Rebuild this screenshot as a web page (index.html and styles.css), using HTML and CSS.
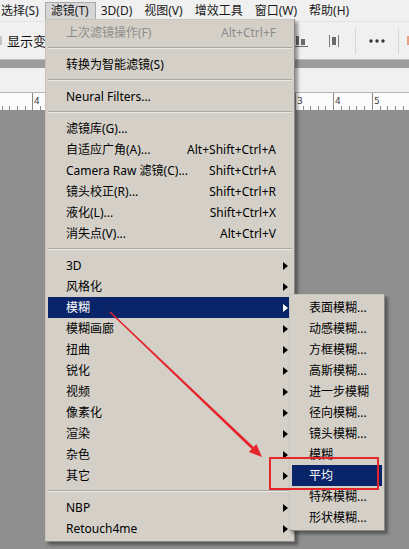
FILE: index.html
```html
<!DOCTYPE html>
<html lang="zh-CN">
<head>
<meta charset="utf-8">
<title>滤镜菜单</title>
<link rel="stylesheet" href="styles.css">
</head>
<body>
<div class="app">
  <div class="menubar">
    <span class="mb-item">选择(S)</span>
    <span class="mb-item active">滤镜(T)</span>
    <span class="mb-item">3D(D)</span>
    <span class="mb-item">视图(V)</span>
    <span class="mb-item">增效工具</span>
    <span class="mb-item">窗口(W)</span>
    <span class="mb-item">帮助(H)</span>
  </div>
  <div class="toolbar">
    <span class="grip"></span>
    <span class="tool-label">显示变换控件</span>
    <svg class="ico ico-first" width="13" height="12" viewBox="0 0 13 12"><rect x="1" y="1" width="3" height="9" fill="#6a6a6a"/><rect x="6" y="4" width="4" height="6" fill="#6a6a6a"/><rect x="0" y="11" width="13" height="1" fill="#6a6a6a"/></svg>
    <svg class="ico ico-second" width="10" height="12" viewBox="0 0 10 12"><rect x="0" y="0" width="1" height="12" fill="#7a7a7a"/><rect x="9" y="0" width="1" height="12" fill="#7a7a7a"/><rect x="3" y="2" width="4" height="8" fill="#6a6a6a"/></svg>
    <span class="tsep tsep-a"></span>
    <svg class="dots" width="16" height="4" viewBox="0 0 16 4"><circle cx="2" cy="2" r="1.7" fill="#333"/><circle cx="8" cy="2" r="1.7" fill="#333"/><circle cx="14" cy="2" r="1.7" fill="#333"/></svg>
    <span class="tsep tsep-b"></span>
    <span class="orange"></span>
  </div>
  <div class="panelbar"></div>
  <div class="tabbar"></div>
  <div class="ruler">
    <svg width="409" height="17" viewBox="0 0 409 17">
      <g stroke="#8a8a8a" stroke-width="1">
        <line x1="32.5" y1="0" x2="32.5" y2="17"/>
        <line x1="295.5" y1="0" x2="295.5" y2="17"/>
        <line x1="333.5" y1="0" x2="333.5" y2="17"/>
        <line x1="372.5" y1="0" x2="372.5" y2="17"/>
        <line x1="2.5" y1="13" x2="2.5" y2="17"/>
        <line x1="9.5" y1="13" x2="9.5" y2="17"/>
        <line x1="17.5" y1="13" x2="17.5" y2="17"/>
        <line x1="25.5" y1="13" x2="25.5" y2="17"/>
        <line x1="40.5" y1="13" x2="40.5" y2="17"/>
        <line x1="303.5" y1="13" x2="303.5" y2="17"/>
        <line x1="310.5" y1="13" x2="310.5" y2="17"/>
        <line x1="318.5" y1="13" x2="318.5" y2="17"/>
        <line x1="325.5" y1="13" x2="325.5" y2="17"/>
        <line x1="341.5" y1="13" x2="341.5" y2="17"/>
        <line x1="349.5" y1="13" x2="349.5" y2="17"/>
        <line x1="356.5" y1="13" x2="356.5" y2="17"/>
        <line x1="364.5" y1="13" x2="364.5" y2="17"/>
        <line x1="380.5" y1="13" x2="380.5" y2="17"/>
        <line x1="387.5" y1="13" x2="387.5" y2="17"/>
        <line x1="395.5" y1="13" x2="395.5" y2="17"/>
        <line x1="403.5" y1="13" x2="403.5" y2="17"/>
      </g>
      <g class="rnum" fill="#444">
        <text x="34" y="11">4</text>
        <text x="297" y="11">3</text>
        <text x="335" y="11">4</text>
        <text x="374" y="11">5</text>
      </g>
    </svg>
  </div>
  <div class="canvas"></div>

  <div class="menu main-menu">
    <div class="mi dis"><span class="label">上次滤镜操作(F)</span><span class="key">Alt+Ctrl+F</span><span class="gut"></span></div>
    <div class="sep"></div>
    <div class="mi"><span class="label">转换为智能滤镜(S)</span><span class="gut"></span></div>
    <div class="sep"></div>
    <div class="mi"><span class="label">Neural Filters...</span><span class="gut"></span></div>
    <div class="sep"></div>
    <div class="mi"><span class="label">滤镜库(G)...</span><span class="gut"></span></div>
    <div class="mi"><span class="label">自适应广角(A)...</span><span class="key">Alt+Shift+Ctrl+A</span><span class="gut"></span></div>
    <div class="mi"><span class="label">Camera Raw 滤镜(C)...</span><span class="key">Shift+Ctrl+A</span><span class="gut"></span></div>
    <div class="mi"><span class="label">镜头校正(R)...</span><span class="key">Shift+Ctrl+R</span><span class="gut"></span></div>
    <div class="mi"><span class="label">液化(L)...</span><span class="key">Shift+Ctrl+X</span><span class="gut"></span></div>
    <div class="mi"><span class="label">消失点(V)...</span><span class="key">Alt+Ctrl+V</span><span class="gut"></span></div>
    <div class="sep"></div>
    <div class="mi"><span class="label">3D</span><span class="gut"><i class="arrow"></i></span></div>
    <div class="mi"><span class="label">风格化</span><span class="gut"><i class="arrow"></i></span></div>
    <div class="mi sel"><span class="label">模糊</span><span class="gut"><i class="arrow"></i></span></div>
    <div class="mi"><span class="label">模糊画廊</span><span class="gut"><i class="arrow"></i></span></div>
    <div class="mi"><span class="label">扭曲</span><span class="gut"><i class="arrow"></i></span></div>
    <div class="mi"><span class="label">锐化</span><span class="gut"><i class="arrow"></i></span></div>
    <div class="mi"><span class="label">视频</span><span class="gut"><i class="arrow"></i></span></div>
    <div class="mi"><span class="label">像素化</span><span class="gut"><i class="arrow"></i></span></div>
    <div class="mi"><span class="label">渲染</span><span class="gut"><i class="arrow"></i></span></div>
    <div class="mi"><span class="label">杂色</span><span class="gut"><i class="arrow"></i></span></div>
    <div class="mi"><span class="label">其它</span><span class="gut"><i class="arrow"></i></span></div>
    <div class="sep"></div>
    <div class="mi"><span class="label">NBP</span><span class="gut"><i class="arrow"></i></span></div>
    <div class="mi"><span class="label">Retouch4me</span><span class="gut"><i class="arrow"></i></span></div>
  </div>

  <div class="menu sub-menu">
    <div class="mi"><span class="label">表面模糊...</span></div>
    <div class="mi"><span class="label">动感模糊...</span></div>
    <div class="mi"><span class="label">方框模糊...</span></div>
    <div class="mi"><span class="label">高斯模糊...</span></div>
    <div class="mi"><span class="label">进一步模糊</span></div>
    <div class="mi"><span class="label">径向模糊...</span></div>
    <div class="mi"><span class="label">镜头模糊...</span></div>
    <div class="mi"><span class="label">模糊</span></div>
    <div class="mi sel"><span class="label">平均</span></div>
    <div class="mi"><span class="label">特殊模糊...</span></div>
    <div class="mi"><span class="label">形状模糊...</span></div>
  </div>

  <svg class="annot" width="409" height="549" viewBox="0 0 409 549">
    <polygon points="109.5,312.6 110.5,311.4 253.7,446.9 251.5,449.1" fill="#e6252b"/>
    <polygon points="262,457 248.8,452.0 256.4,444.0" fill="#e6252b"/>
    <rect x="270" y="458" width="108" height="31" fill="none" stroke="#e6252b" stroke-width="2"/>
  </svg>
</div>
</body>
</html>
```

FILE: styles.css
```css
html, body {
  margin: 0;
  padding: 0;
}

body {
  width: 409px;
  height: 549px;
  overflow: hidden;
  background: #8f8f8f;
  font-family: "Noto Sans", "Noto Sans CJK SC", sans-serif;
  font-size: 12px;
  color: #000;
}

.app {
  position: relative;
  width: 409px;
  height: 549px;
  display: flex;
  flex-direction: column;
}

/* ---------- menu bar ---------- */
.menubar {
  flex: none;
  display: flex;
  align-items: flex-start;
  gap: 12px;
  padding: 2px 0 0 1px;
  box-sizing: border-box;
  background: #f0f0f0;
  border-bottom: 1px solid #e2e2e2;
  height: 22px;
  color: #1a1a1a;
}

.mb-item {
  line-height: 18px;
  white-space: nowrap;
}

.mb-item.active {
  padding: 0 6px 0 5px;
  margin: 0 -7px 0 -6px;
  line-height: 16px;
  border: 1px solid #a8a8a8;
  background: #d6d6d6;
}

/* ---------- tool options bar ---------- */
.toolbar {
  height: 37px;
  flex: none;
  display: flex;
  align-items: center;
  background: #f0f0f0;
}

.grip {
  width: 2px;
  height: 9px;
  background: #c4c4c4;
}

.tool-label {
  margin-left: 5px;
  font-size: 13px;
  white-space: nowrap;
  color: #111;
}

.ico-first {
  margin-left: auto;
}

.ico-second {
  margin-left: 21px;
}

.tsep {
  width: 1px;
  height: 26px;
  background: #d6d6d6;
}

.tsep-a {
  margin-left: 16px;
}

.dots {
  margin-left: 13px;
}

.tsep-b {
  margin-left: 13px;
}

.orange {
  margin-left: 8px;
  width: 2px;
  height: 9px;
  background: #e8a088;
}

/* ---------- bars under toolbar ---------- */
.panelbar {
  height: 9px;
  flex: none;
  box-sizing: border-box;
  background: #9c9c9c;
  border-top: 1px solid #bdbdbd;
}

.tabbar {
  height: 24px;
  flex: none;
  background: #f0f0f0;
}

.ruler {
  height: 18px;
  flex: none;
  box-sizing: border-box;
  background: #fbfbfb;
  border-top: 1px solid #b5b5b5;
}

.ruler svg {
  display: block;
}

.rnum {
  font-family: "DejaVu Sans", sans-serif;
  font-size: 9px;
}

.canvas {
  flex: 1;
  background: #8f8f8f;
}

/* ---------- popup menus ---------- */
.menu {
  position: absolute;
  box-sizing: border-box;
  background: #d4d0c8;
  border: 1px solid;
  border-color: #c8c5be #8a8884 #8a8884 #c8c5be;
  padding: 2px;
  box-shadow: 3px 3px 3px rgba(0, 0, 0, 0.38);
}

.main-menu {
  left: 45px;
  top: 19px;
  width: 250px;
}

.sub-menu {
  left: 289px;
  top: 294px;
  width: 96px;
}

.mi {
  display: flex;
  align-items: center;
  height: 21px;
  line-height: 21px;
  padding-left: 18px;
  white-space: nowrap;
}

.sub-menu .mi {
  padding-left: 17px;
}

.mi .label {
  flex: 1;
}

.mi .gut {
  width: 16px;
  height: 21px;
  box-sizing: border-box;
  padding-right: 4px;
  display: flex;
  align-items: center;
  justify-content: flex-end;
}

.arrow {
  display: block;
  width: 0;
  height: 0;
  border-left: 5px solid #000;
  border-top: 4px solid transparent;
  border-bottom: 4px solid transparent;
}

.mi.sel {
  background: #0a246a;
  color: #fff;
}

.mi.sel .arrow {
  border-left-color: #fff;
}

.mi.dis {
  color: #8c8c8c;
}

.sep {
  height: 11px;
  box-sizing: border-box;
  padding-top: 4px;
}

.sep::before {
  content: "";
  display: block;
  border-top: 1px solid #a9a6a0;
  border-bottom: 1px solid #ebe9e4;
}

/* ---------- annotation overlay ---------- */
.annot {
  position: absolute;
  left: 0;
  top: 0;
  pointer-events: none;
}
```
